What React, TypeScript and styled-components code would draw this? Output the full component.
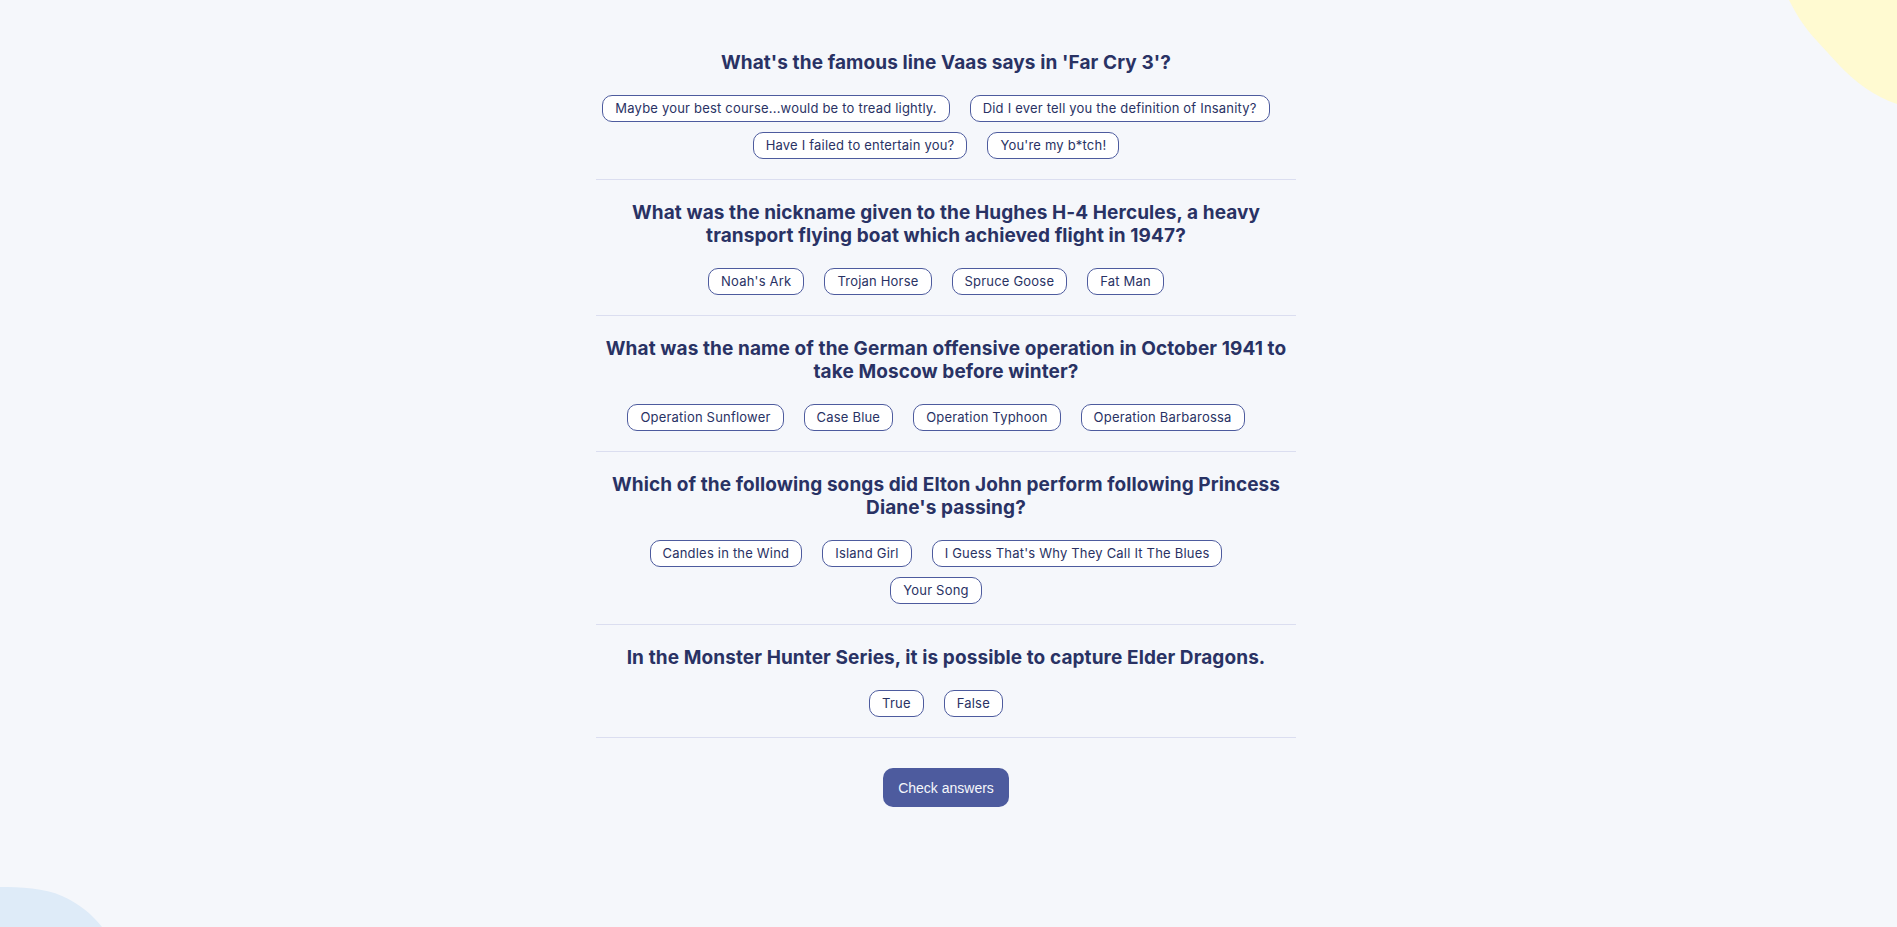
import React from "react";
import styled, { createGlobalStyle } from "styled-components";

const GlobalStyle = createGlobalStyle`
  html, body {
    margin: 0;
    padding: 0;
    background: #f5f7fb;
  }
  * { box-sizing: border-box; }
`;

const Page = styled.div`
  position: relative;
  min-height: 100vh;
  overflow: hidden;
  background: #f5f7fb;
  padding: 51px 5px 40px 0;
  font-family: Inter, "Noto Sans", sans-serif;
  color: #293264;
`;

const YellowBlob = styled.svg`
  position: absolute;
  top: 0;
  right: 0;
  width: 108px;
  height: 106px;
`;

const BlueBlob = styled.svg`
  position: absolute;
  left: 0;
  bottom: 0;
  width: 104px;
  height: 40px;
`;

const Quiz = styled.main`
  position: relative;
  width: 700px;
  margin: 0 auto;
  display: flex;
  flex-direction: column;
  align-items: center;
`;

const Question = styled.section<{ $first?: boolean }>`
  width: 100%;
  padding: ${(p) => (p.$first ? "0 0 20px" : "21px 0 20px")};
  border-bottom: 1px solid #dbdef0;
  display: flex;
  flex-direction: column;
  align-items: center;
`;

const Title = styled.h2`
  margin: 0 0 21px;
  font-size: 19px;
  line-height: 23px;
  letter-spacing: 0.1px;
  font-weight: 700;
  text-align: center;
  color: #293264;
`;

const Answers = styled.div`
  display: flex;
  flex-wrap: wrap;
  justify-content: center;
  row-gap: 10px;
`;

const Answer = styled.button`
  margin-right: 20px;
  height: 27px;
  padding: 0 12px;
  border: 1px solid #4d5b9e;
  border-radius: 10px;
  background: #ffffff;
  color: #293264;
  font-family: Inter, "Noto Sans", sans-serif;
  font-size: 13px;
  letter-spacing: 0.2px;
  line-height: 25px;
  cursor: pointer;
`;

const CheckButton = styled.button`
  margin-top: 30px;
  height: 39px;
  padding: 0 15px;
  border: none;
  border-radius: 10px;
  background: #4d5b9e;
  color: #f5f7fb;
  font-family: "Liberation Sans", Arial, sans-serif;
  font-size: 14px;
  cursor: pointer;
`;

const questions = [
  {
    q: "What's the famous line Vaas says in 'Far Cry 3'?",
    a: [
      "Maybe your best course...would be to tread lightly.",
      "Did I ever tell you the definition of Insanity?",
      "Have I failed to entertain you?",
      "You're my b*tch!",
    ],
  },
  {
    q: "What was the nickname given to the Hughes H-4 Hercules, a heavy transport flying boat which achieved flight in 1947?",
    a: ["Noah's Ark", "Trojan Horse", "Spruce Goose", "Fat Man"],
  },
  {
    q: "What was the name of the German offensive operation in October 1941 to take Moscow before winter?",
    a: ["Operation Sunflower", "Case Blue", "Operation Typhoon", "Operation Barbarossa"],
  },
  {
    q: "Which of the following songs did Elton John perform following Princess Diane's passing?",
    a: [
      "Candles in the Wind",
      "Island Girl",
      "I Guess That's Why They Call It The Blues",
      "Your Song",
    ],
  },
  {
    q: "In the Monster Hunter Series, it is possible to capture Elder Dragons.",
    a: ["True", "False"],
  },
];

export default function App() {
  return (
    <>
      <GlobalStyle />
      <Page>
        <YellowBlob viewBox="0 0 108 106" aria-hidden>
          <path
            d="M0 0 C6 12 14 26 28 41 L50 65 C66 82 86 97 108 104 L108 0 Z"
            fill="#fffad1"
          />
        </YellowBlob>
        <BlueBlob viewBox="0 0 104 40" aria-hidden>
          <path d="M0 0 C20 0 45 1 62 9 C78 16 92 27 102 40 L0 40 Z" fill="#deebf8" />
        </BlueBlob>
        <Quiz>
          {questions.map((item, i) => (
            <Question key={i} $first={i === 0}>
              <Title>{item.q}</Title>
              <Answers>
                {item.a.map((ans) => (
                  <Answer key={ans}>{ans}</Answer>
                ))}
              </Answers>
            </Question>
          ))}
          <CheckButton>Check answers</CheckButton>
        </Quiz>
      </Page>
    </>
  );
}
